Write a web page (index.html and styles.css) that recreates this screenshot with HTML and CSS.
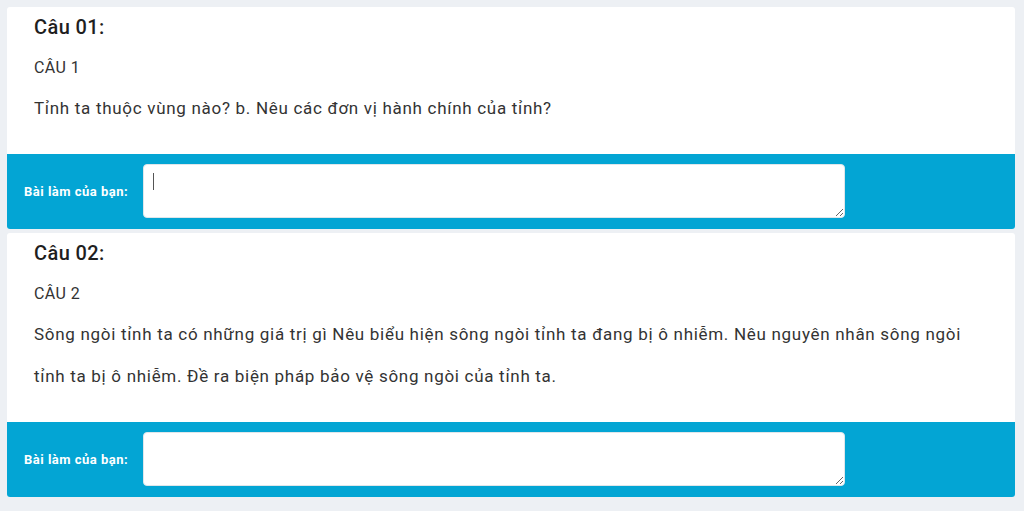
FILE: index.html
```html
<!DOCTYPE html>
<html lang="vi">
<head>
<meta charset="utf-8">
<title>Bài làm</title>
<link rel="stylesheet" href="styles.css">
</head>
<body>
<div class="page">
  <section class="card">
    <div class="question">
      <h2 class="q-title">Câu 01:</h2>
      <div class="q-name">CÂU 1</div>
      <p class="q-text">Tỉnh ta thuộc vùng nào? b. Nêu các đơn vị hành chính của tỉnh?</p>
    </div>
    <div class="answer">
      <label class="answer-label">Bài làm của bạn:</label>
      <div class="field">
        <textarea class="answer-input"></textarea>
        <span class="caret"></span>
      </div>
    </div>
  </section>
  <section class="card">
    <div class="question">
      <h2 class="q-title">Câu 02:</h2>
      <div class="q-name">CÂU 2</div>
      <p class="q-text">Sông ngòi tỉnh ta có những giá trị gì Nêu biểu hiện sông ngòi tỉnh ta đang bị ô nhiễm. Nêu nguyên nhân sông ngòi tỉnh ta bị ô nhiễm. Đề ra biện pháp bảo vệ sông ngòi của tỉnh ta.</p>
    </div>
    <div class="answer">
      <label class="answer-label">Bài làm của bạn:</label>
      <div class="field">
        <textarea class="answer-input"></textarea>
      </div>
    </div>
  </section>
</div>
</body>
</html>
```

FILE: styles.css
```css
* { box-sizing: border-box; }
html, body {
  margin: 0;
  padding: 0;
  background: #edf0f4;
  font-family: Roboto, "Noto Sans", "Liberation Sans", sans-serif;
  color: #222;
}
.page {
  padding: 7px 9px 0 7px;
  display: flex;
  flex-direction: column;
  gap: 4px;
}
.card {
  background: #fff;
  border-radius: 3px;
  overflow: hidden;
}
.question {
  padding: 6px 40px 25px 27px;
}
.q-title {
  margin: 0;
  font-size: 20px;
  line-height: 28px;
  font-weight: 500;
  letter-spacing: 0.4px;
  color: #1f1f1f;
}
.q-name {
  margin-top: 15px;
  font-size: 16px;
  line-height: 24px;
  letter-spacing: 0.4px;
  color: #333;
}
.q-text {
  margin: 7px 0 0;
  font-size: 17px;
  line-height: 42px;
  letter-spacing: 0.7px;
  color: #333;
}
.answer {
  background: #03a5d4;
  height: 75px;
  padding: 10px 0 11px;
  display: flex;
  align-items: center;
}
.answer-label {
  width: 136px;
  padding-left: 17px;
  font-size: 13px;
  font-weight: 700;
  letter-spacing: 0.5px;
  color: #fff;
}
.field {
  position: relative;
  width: 702px;
  height: 54px;
}
.answer-input {
  display: block;
  width: 100%;
  height: 100%;
  border: 1px solid #dfe6ea;
  border-radius: 4px;
  background: #fff;
  font-family: inherit;
  font-size: 14px;
  outline: none;
}
.caret {
  position: absolute;
  left: 10px;
  top: 9px;
  width: 1px;
  height: 17px;
  background: #555;
}
```
